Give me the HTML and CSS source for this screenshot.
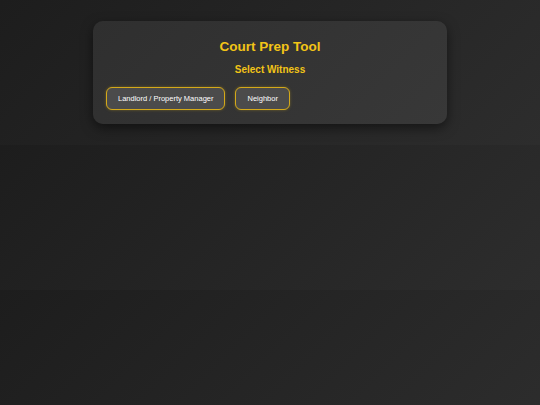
FILE: index.html
```html
<!DOCTYPE html>
<html>
<head>
<meta charset="utf-8">
<link rel="stylesheet" href="styles.css">
</head>
<body>
<div class="card">
  <h1 class="title">Court Prep Tool</h1>
  <h2 class="subtitle">Select Witness</h2>
  <div class="buttons">
    <button class="btn">Landlord / Property Manager</button>
    <button class="btn">Neighbor</button>
  </div>
</div>
</body>
</html>
```

FILE: styles.css
```css
html {
  margin: 0;
}
body {
  margin: 0;
  padding: 21px 0 21px;
  font-family: "Liberation Sans", Arial, sans-serif;
  background: linear-gradient(135deg, #1d1d1d 0%, #2d2d2d 100%);
}
.card {
  width: 354px;
  box-sizing: border-box;
  margin: 0 auto;
  padding: 18px 13px 14px;
  border-radius: 10px;
  background: linear-gradient(135deg, #2f2f2f 0%, #383838 100%);
  box-shadow: 0 4px 12px rgba(0, 0, 0, 0.5);
}
.title {
  margin: 0;
  text-align: center;
  color: #f2c417;
  font-size: 13.5px;
  font-weight: bold;
  line-height: 15px;
}
.subtitle {
  margin: 10px 0 0;
  text-align: center;
  color: #f2c417;
  font-size: 10px;
  font-weight: bold;
  line-height: 12px;
}
.buttons {
  display: flex;
  gap: 10px;
  margin-top: 11px;
}
.btn {
  height: 23px;
  padding: 0 11px;
  background: #4b4b4b;
  color: #ffffff;
  border: 1px solid #d4a91a;
  border-radius: 6px;
  font-family: "Liberation Sans", Arial, sans-serif;
  font-size: 7.5px;
  box-shadow: 0 0 3px rgba(212, 169, 26, 0.4);
}
```
